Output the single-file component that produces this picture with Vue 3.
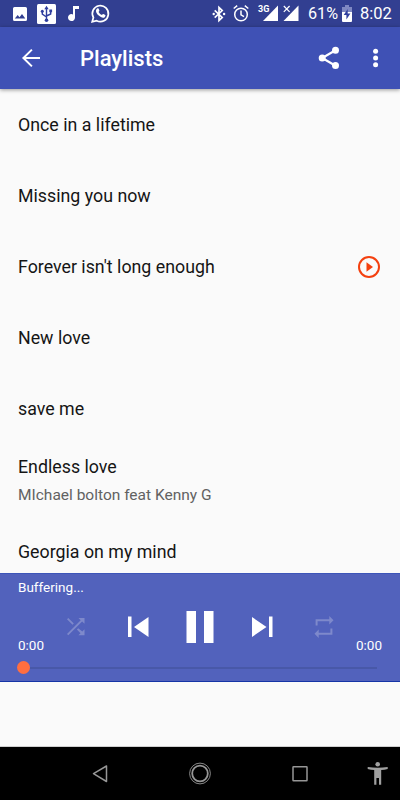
<script setup>
const songs = [
  { title: 'Once in a lifetime' },
  { title: 'Missing you now' },
  { title: "Forever isn't long enough", playing: true },
  { title: 'New love' },
  { title: 'save me' },
  { title: 'Endless love', artist: 'MIchael bolton feat Kenny G' },
  { title: 'Georgia on my mind' },
]
</script>

<template>
  <div class="screen">
    <div class="status">
      <svg class="picture" width="14" height="14" viewBox="0 0 14 14"><path fill="#fff" fill-rule="evenodd" d="M1.500 0h11Q14 0 14 1.500v11Q14 14 12.500 14h-11Q0 14 0 12.500v-11Q0 0 1.500 0ZM1.800 11.500h10.500L9 7 6.500 10.200 4.700 8Z" /></svg>
      <svg class="usb" width="19" height="20" viewBox="0 0 19 20"><rect width="19" height="20" rx="1.500" fill="#fff" /><g fill="none" stroke="#303f9f" stroke-width="1.400"><path d="M9.500 4v12M5.300 8v2.200L9.500 13M13.700 7v3L9.500 12" /></g><path fill="#303f9f" d="m9.500 1.800 2.200 3.400H7.300ZM12.300 5.500h2.800v2.800h-2.800Z" /><circle cx="5.300" cy="7.300" r="1.500" fill="#303f9f" /><circle cx="9.500" cy="16.200" r="1.800" fill="#303f9f" /></svg>
      <svg class="note" width="11" height="15" viewBox="0 0 11 15"><path fill="#fff" d="M5 0h6v3H7v8.500A3.500 3.500 0 1 1 5 8.400Z" /></svg>
      <svg class="whatsapp" width="19" height="19" viewBox="0 0 19 19"><path d="m1.200 17.800 1.200-4.300A8 8 0 1 1 5.700 16.700Z" fill="none" stroke="#fff" stroke-width="1.700" /><path fill="#fff" d="M6.200 4.600c.5-.4 1-.4 1.300 0l.9 2c.1.500-.5 1-.8 1.400.8 1.500 1.900 2.500 3.400 3.100.5-.5.900-1.200 1.400-1l1.900 1c.5.400 0 1.600-.6 2.100-1.500 1.200-4 .2-6-1.600C5.600 9.700 4.300 7.400 5.200 5.700q.4-.8 1-1.100Z" /></svg>
      <span class="spacer"></span>
      <svg class="bluetooth" width="14" height="16" viewBox="0 0 14 16"><path d="m2.700 4.400 7.500 7L7 14.500v-13l3.200 3.100-7.500 7" fill="none" stroke="#fff" stroke-width="1.700" /><circle cx="1.700" cy="8" r="1.200" fill="#fff" /><circle cx="12.100" cy="8" r="1.200" fill="#fff" /></svg>
      <svg class="alarm" width="16" height="17" viewBox="0 0 16 17"><g fill="none" stroke="#fff" stroke-width="1.500"><circle cx="8" cy="9.500" r="6.300" /><path d="M8 5.600v4.300l3 1.800M.7 3.500 4.200.7M15.300 3.500 11.800.7" /></g></svg>
      <svg class="mobile" width="20" height="17" viewBox="0 0 20 17"><path fill="#fff" d="M20 .5v15.500H5Z" /><text class="network" x="0" y="7.300">3G</text></svg>
      <svg class="no-service" width="16" height="17" viewBox="0 0 16 17"><path fill="#fff" d="M15.500.5v15.500H.5Z" /><path d="m.8 1 5.800 5.800M6.600 1 .8 6.800" stroke="#323f91" stroke-width="3.200" /><path d="m.8 1 5.800 5.800M6.600 1 .8 6.800" stroke="#fff" stroke-width="1.200" /></svg>
      <span class="percent">61%</span>
      <svg class="battery" width="10" height="17" viewBox="0 0 10 17"><path fill="#7f88c2" d="M3 0h4v2h3v6H0V2h3Z" /><path fill="#fff" d="M0 7h10v9q0 1-1 1H1q-1 0-1-1Z" /><path fill="#303f9f" d="M5.700 4 1.700 10h2.700v4.500l4-6H5.700Z" /></svg>
      <span class="clock">8:02</span>
    </div>

    <header class="appbar">
      <svg class="back" width="24" height="24" viewBox="0 0 24 24"><path d="M21 12H4.400M12.900 3.600 4.400 12l8.500 8.400" fill="none" stroke="#fff" stroke-width="2" /></svg>
      <h1>Playlists</h1>
      <svg class="share" width="22" height="24" viewBox="0 0 22 24"><path d="M17.500 4.200 4.200 12l13.300 7.800" fill="none" stroke="#fff" stroke-width="2.200" /><g fill="#fff"><circle cx="17.500" cy="4.200" r="3.500" /><circle cx="4.200" cy="12" r="3.500" /><circle cx="17.500" cy="19.600" r="3.500" /></g></svg>
      <svg class="more" width="6" height="20" viewBox="0 0 6 20"><g fill="#fff"><circle cx="2.600" cy="3.300" r="2.500" /><circle cx="2.600" cy="10" r="2.500" /><circle cx="2.600" cy="16.700" r="2.500" /></g></svg>
    </header>

    <main class="list">
      <div v-for="song in songs" :key="song.title" class="song" :class="{ detailed: song.artist }">
        <div class="words">
          <div class="title">{{ song.title }}</div>
          <div v-if="song.artist" class="artist">{{ song.artist }}</div>
        </div>
        <svg v-if="song.playing" width="24" height="24" viewBox="0 0 24 24"><circle cx="12" cy="12" r="10" fill="none" stroke="#f4400f" stroke-width="2" /><path fill="#f4400f" d="M9.500 7.300v9.400l6.500-4.700Z" /></svg>
      </div>
    </main>

    <section class="player">
      <div class="state">Buffering...</div>
      <div class="controls">
        <span class="time">0:00</span>
        <div class="buttons">
          <svg width="20" height="20" viewBox="0 0 20 20"><path fill="#7e89cb" d="M7.800 6.400 2.300 1 1 2.300l5.500 5.400ZM12.500 1l2.200 2.200L1 17l1.300 1.300L16.100 4.500 18.500 6.800V1ZM12.200 11.200l-1.300 1.400 3.600 3.600-2.100 2.100h6.100v-6l-2.200 2.200Z" /></svg>
          <svg width="22" height="22" viewBox="0 0 22 22"><path fill="#fff" d="M0 .5h3.500v20.500H0ZM20.500 1v20L6 11Z" /></svg>
          <svg width="28" height="32" viewBox="0 0 28 32"><path fill="#fff" d="M.5 0h9.500v32H.5ZM18 0h9.500v32H18Z" /></svg>
          <svg width="22" height="22" viewBox="0 0 22 22"><path fill="#fff" d="M18 .5h3.500v20.500H18ZM1 1v20l14.500-10Z" /></svg>
          <svg width="20" height="22" viewBox="0 0 20 22"><path fill="#7e89cb" d="M3.600 5.300h11.700v3.200l4.200-4.200L15.300.1v3.200H1.600v6.300h2ZM16.400 16.700H4.700v-3.200L.5 17.700l4.200 4.200v-3.200h13.700v-6.300h-2Z" /></svg>
        </div>
        <span class="time end">0:00</span>
      </div>
      <div class="seek"><span class="thumb"></span><span class="track"></span></div>
    </section>

    <div class="blank"></div>

    <nav class="navigation">
      <svg class="nav-back" width="16" height="18" viewBox="0 0 16 18"><path d="M14.500 1v15.500L1.500 8.700Z" fill="none" stroke="#969696" stroke-width="1.500" stroke-linejoin="round" /></svg>
      <svg class="nav-home" width="22" height="22" viewBox="0 0 22 22"><g fill="none" stroke="#969696"><circle cx="11" cy="10.500" r="10.400" stroke-width=".9" /><circle cx="11" cy="10.500" r="7.800" stroke-width="1.800" /></g></svg>
      <svg class="nav-recent" width="16" height="16" viewBox="0 0 16 16"><rect x="1" y=".7" width="14" height="14" rx=".5" fill="none" stroke="#969696" stroke-width="1.500" /></svg>
      <svg class="nav-access" width="20" height="23" viewBox="0 0 20 23"><circle cx="9.700" cy="2.300" r="2.300" fill="#a0a0a0" /><path fill="#a0a0a0" d="M-.3 5q10 1.600 20 0v2q-3.200.8-6.500 1v14.700H11V16H8.400v6.700H6.200V8Q2.900 7.800-.3 7Z" /></svg>
    </nav>
  </div>
</template>

<style>
body {
  margin: 0;
}
</style>

<style scoped>
.screen {
  display: flex;
  flex-direction: column;
  width: 400px;
  height: 800px;
  overflow: hidden;
  background: #fafafa;
  font-family: Roboto, sans-serif;
  color: #151515;
}
svg {
  display: block;
  flex: none;
  overflow: visible;
}
.status {
  display: flex;
  align-items: center;
  flex: none;
  box-sizing: border-box;
  height: 27px;
  padding: 0 9px 0 13px;
  background: #323f91;
  color: #fff;
}
.usb { margin-left: 10px; }
.note { margin-left: 12px; }
.whatsapp { margin-left: 12px; }
.spacer { flex: 1; }
.alarm { margin-left: 7px; }
.mobile { margin-left: 9px; }
.no-service { margin-left: 5px; }
.network {
  font-size: 9px;
  font-weight: 700;
  fill: #fff;
  stroke: #323f91;
  stroke-width: 1px;
  paint-order: stroke;
}
.percent, .clock {
  line-height: 28px;
  white-space: nowrap;
}
.percent {
  width: 29px;
  margin-left: 9px;
  font-size: 16.200px;
}
.battery { margin-left: 5px; }
.clock {
  width: 31px;
  margin-left: 8px;
  font-size: 16.500px;
}
.appbar {
  display: flex;
  align-items: center;
  flex: none;
  box-sizing: border-box;
  height: 62px;
  padding: 0 21px 0 19px;
  background: #3f51b5;
  color: #fff;
  box-shadow: 0 1px 4px rgba(0, 0, 0, .4);
}
h1 {
  flex: 1;
  margin: 2px 0 0 37px;
  font-size: 22px;
  font-weight: 500;
  line-height: 26px;
}
.more { margin-left: 33px; }
.list {
  flex: none;
  height: 484px;
  overflow: hidden;
}
.song {
  display: flex;
  align-items: center;
  justify-content: space-between;
  box-sizing: border-box;
  height: 71px;
  padding: 0 19px 0 18px;
}
.detailed {
  height: 72px;
  padding-top: 1px;
}
.title {
  font-size: 17.800px;
  line-height: 24px;
  white-space: nowrap;
}
.artist {
  margin-top: 5px;
  font-size: 15.500px;
  line-height: 22px;
  color: #626262;
  white-space: nowrap;
}
.player {
  flex: none;
  box-sizing: border-box;
  height: 109px;
  border-top: 1px solid #3d55b9;
  border-bottom: 1px solid #1534a6;
  background: #5262bc;
  color: #fff;
}
.state {
  height: 26px;
  padding-left: 18px;
  font-size: 13.500px;
  line-height: 26px;
}
.controls {
  display: flex;
  align-items: flex-end;
  height: 54px;
  padding: 0 18px;
}
.time {
  width: 26px;
  font-size: 13.500px;
  line-height: 18px;
}
.end {
  text-align: right;
}
.buttons {
  display: flex;
  align-items: center;
  justify-content: space-between;
  align-self: flex-start;
  flex: 1;
  height: 54px;
  padding: 0 22px;
}
.buttons svg:nth-child(2) { margin-left: 5px; }
.buttons svg:nth-child(4) { margin-right: 5px; }
.seek {
  display: flex;
  align-items: center;
  height: 27px;
  padding: 0 23px 0 17px;
}
.thumb {
  width: 13px;
  height: 13px;
  border-radius: 50%;
  background: #ff6e40;
}
.track {
  flex: 1;
  height: 2px;
  background: #4858a8;
}
.blank {
  flex: 1;
}
.navigation {
  display: flex;
  align-items: center;
  flex: none;
  box-sizing: border-box;
  height: 54px;
  border-top: 1px solid #cfcfcf;
  background: #000;
}
.nav-back { margin-left: 92px; }
.nav-home { margin-left: 81px; }
.nav-recent { margin-left: 81px; }
.nav-access { margin-left: 60px; }
</style>
